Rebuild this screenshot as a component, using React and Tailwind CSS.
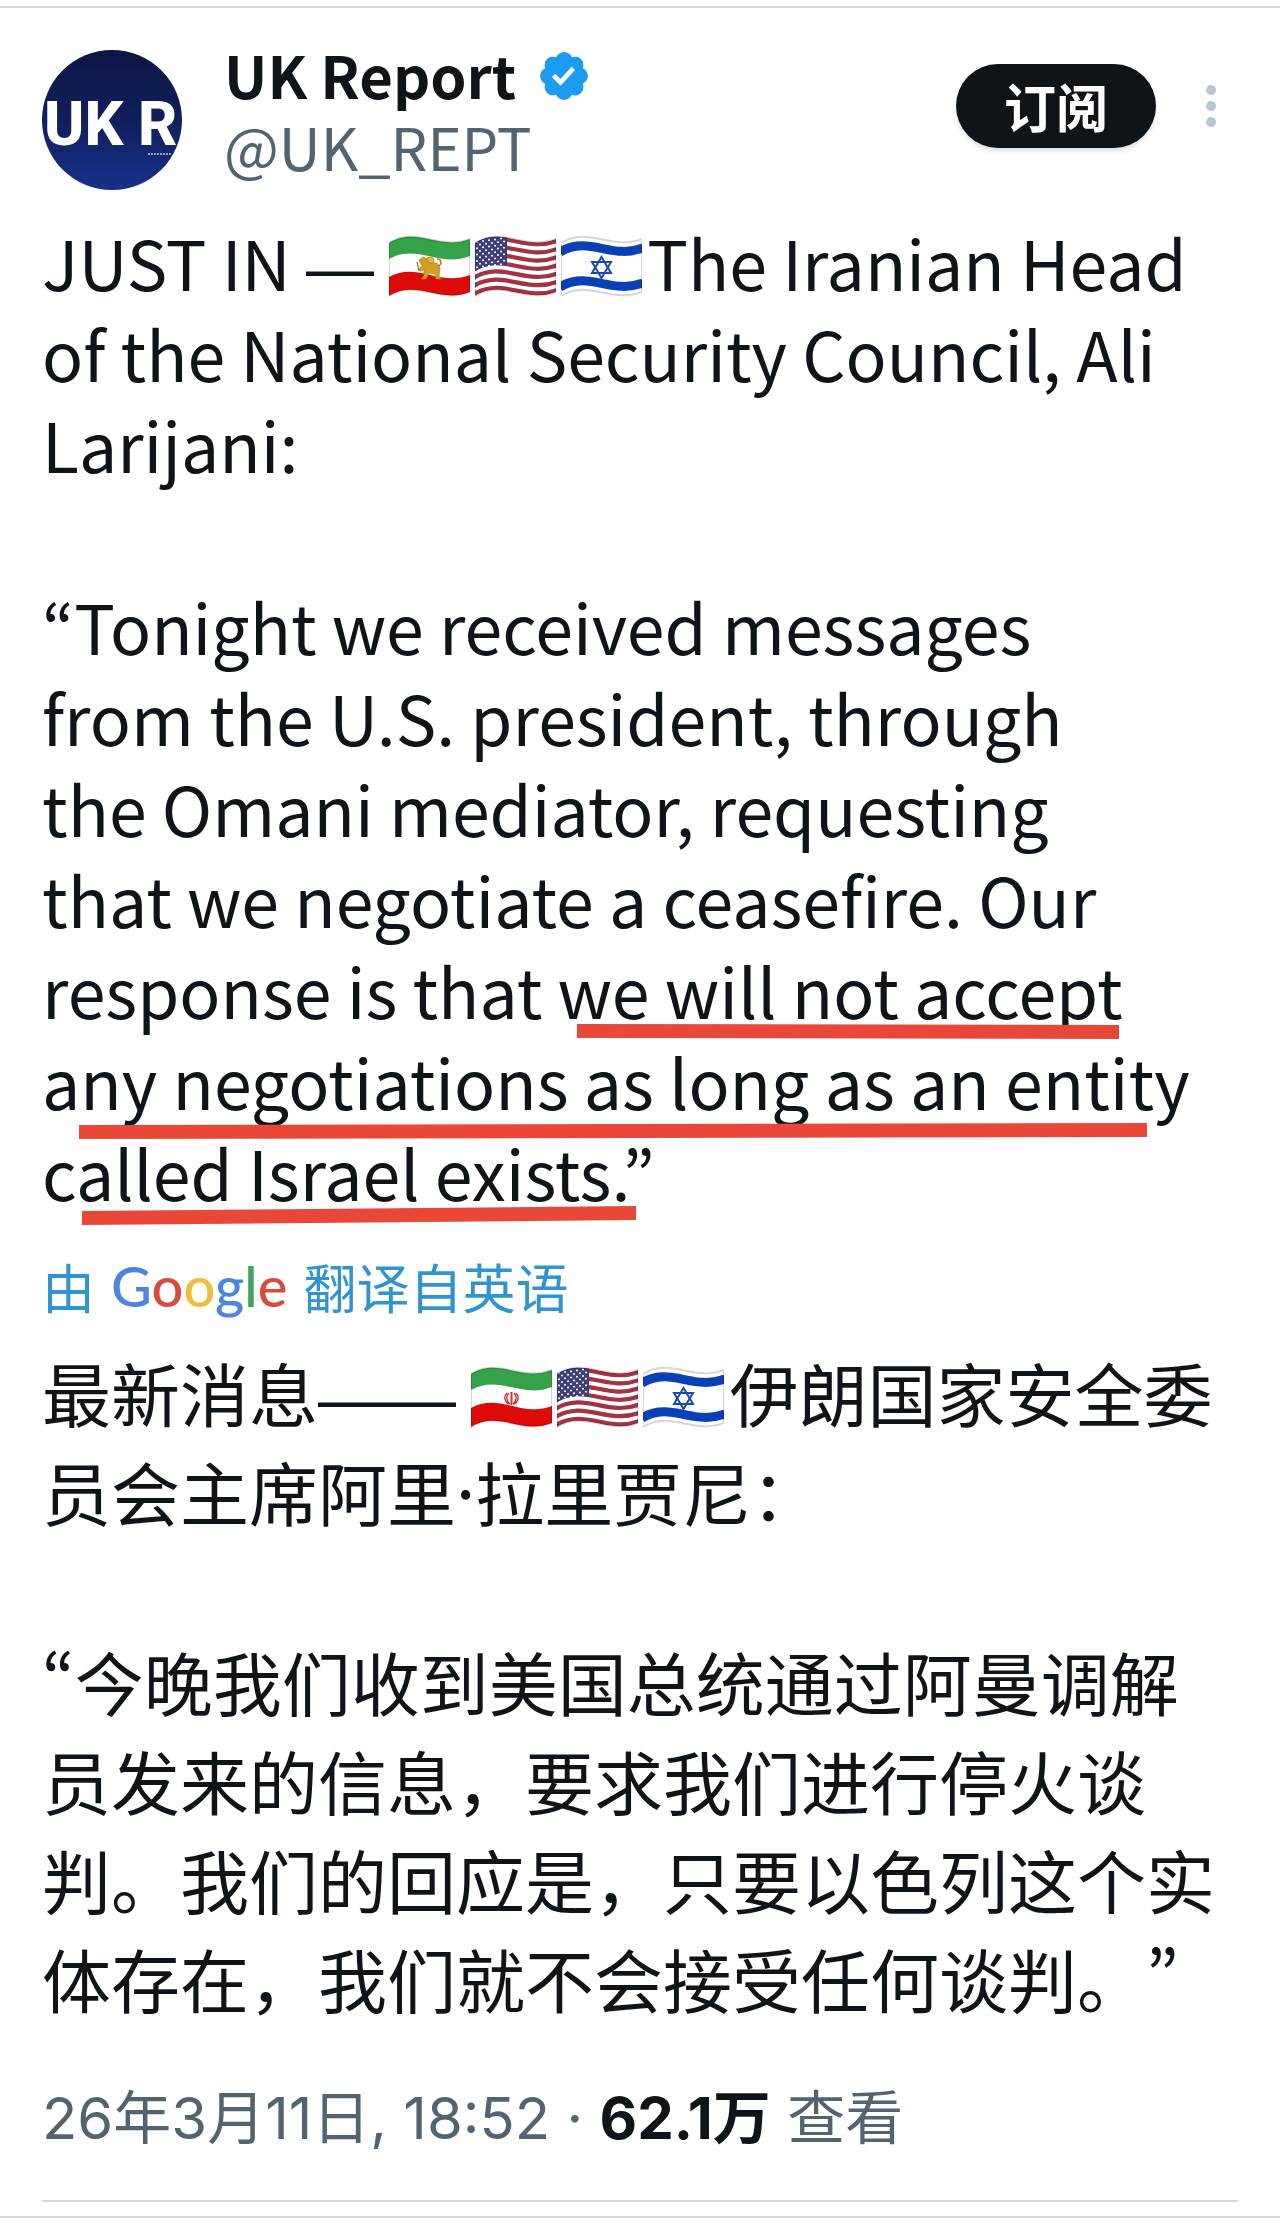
import { useId } from "react";

function VerifiedBadge() {
  return (
    <svg viewBox="0 0 22 22" className="w-14 h-14 mt-1" role="img" aria-label="Verified account">
      <path
        fill="#1d9bf0"
        d="M20.396 11c-.018-.646-.215-1.275-.57-1.816-.354-.54-.852-.972-1.438-1.246.223-.607.27-1.264.14-1.897-.131-.634-.437-1.218-.882-1.687-.47-.445-1.053-.75-1.687-.882-.633-.13-1.29-.083-1.897.14-.273-.587-.704-1.086-1.245-1.44S11.647 1.62 11 1.604c-.646.017-1.273.213-1.813.568s-.969.854-1.24 1.44c-.608-.223-1.267-.272-1.902-.14-.635.13-1.22.436-1.69.882-.445.47-.749 1.055-.878 1.688-.13.633-.08 1.29.144 1.896-.587.274-1.087.705-1.443 1.245-.356.54-.555 1.17-.574 1.817.02.647.218 1.276.574 1.817.356.54.856.972 1.443 1.245-.224.606-.274 1.263-.144 1.896.13.634.433 1.218.877 1.688.47.443 1.054.747 1.687.878.633.132 1.29.084 1.897-.136.274.586.705 1.084 1.246 1.439.54.354 1.17.551 1.816.569.647-.016 1.276-.213 1.817-.567s.972-.854 1.245-1.44c.604.239 1.266.296 1.903.164.636-.132 1.22-.447 1.68-.907.46-.46.776-1.044.908-1.681s.075-1.299-.165-1.903c.586-.274 1.084-.705 1.439-1.246.354-.54.551-1.17.569-1.816z"
      />
      <path
        fill="#fff"
        d="M9.662 14.85l-3.429-3.428 1.293-1.302 2.072 2.072 4.4-4.794 1.347 1.246z"
      />
    </svg>
  );
}

const WAVE = "M0 8C28 -9 50 16 81 4V57C50 69 28 44 0 61Z";

function Flag({ label, children }) {
  const id = useId();
  return (
    <svg
      viewBox="0 0 81 64"
      className="inline-block w-[81px] h-16 mr-[5px] align-[-8px]"
      role="img"
      aria-label={label}
    >
      <clipPath id={id}>
        <path d={WAVE} />
      </clipPath>
      <g clipPath={`url(#${id})`}>{children}</g>
      <path d={WAVE} fill="none" stroke="#000" strokeOpacity="0.16" strokeWidth="2" />
    </svg>
  );
}

function IranFlag({ lion }) {
  return (
    <Flag label="Iran">
      <rect width="81" height="64" fill="#fff" />
      <path d="M0 -14C28 -31 50 -6 81 -18V21C50 33 28 8 0 24Z" fill="#35a148" />
      <path d="M0 42C28 26 50 52 81 40V70H0Z" fill="#dd0a0a" />
      {lion ? (
        <g fill="#d5a021" stroke="#a87414" strokeWidth="0.6">
          <circle cx="41" cy="26" r="4" fill="#e8b93a" />
          <path d="M30 25l4-3 4 2 2 4 8 0 3 5-1 7 2 4h-5l-1-5-6-1-3 6h-5l3-3 0-6-4 1-1-2 3-3z" />
          <path d="M49 31c5-1 3-8-1-7" fill="none" strokeWidth="1.4" />
          <path d="M30 36l-2-9" fill="none" strokeWidth="1.2" />
        </g>
      ) : (
        <g fill="none" stroke="#d22f2f" strokeWidth="1.4">
          <path d="M40.5 26v13" strokeWidth="2" />
          <path d="M38 27c-3 3-3 8 1 11M43 27c3 3 3 8-1 11" />
          <path d="M36 27c-4 4-2 9 2 11M45 27c4 4 2 9-2 11" />
        </g>
      )}
    </Flag>
  );
}

function UsaFlag() {
  const stripes = [0, 1, 2, 3, 4, 5, 6];
  const stars = [0, 1, 2, 3, 4, 5, 6, 7, 8];
  return (
    <Flag label="United States">
      <rect width="81" height="64" fill="#fff" />
      {stripes.map((i) => (
        <path
          key={i}
          d="M-1 8C28 -9 50 16 82 4"
          transform={`translate(0 ${i * 8.2 + 1.8})`}
          fill="none"
          stroke="#a23344"
          strokeWidth="4.2"
        />
      ))}
      <path d="M0 0H32V31C20 28 10 31 0 36Z" fill="#3f3f78" />
      {stars.map((row) =>
        (row % 2 ? [5, 11, 17, 23, 29] : [2, 8, 14, 20, 26]).map((x) => (
          <circle
            key={`${row}-${x}`}
            cx={x}
            cy={row * 3.2 + 7 - x * 0.13}
            r="1"
            fill="#fff"
          />
        )),
      )}
    </Flag>
  );
}

function IsraelFlag() {
  return (
    <Flag label="Israel">
      <rect width="81" height="64" fill="#fff" />
      <g fill="none" stroke="#0a3fb5" strokeWidth="9">
        <path d="M-1 17C28 0 50 25 82 13" />
        <path d="M-1 52C28 35 50 60 82 48" />
      </g>
      <g fill="none" stroke="#1a49b0" strokeWidth="2">
        <path d="M40.5 22L50 38H31Z" />
        <path d="M40.5 43L50 27H31Z" />
      </g>
    </Flag>
  );
}

function Avatar() {
  return (
    <svg viewBox="0 0 140 140" className="w-[140px] h-[140px] shrink-0" role="img" aria-label="UK Report">
      <defs>
        <linearGradient id="avatar-bg" x1="0" y1="0" x2="0" y2="1">
          <stop offset="0" stopColor="#0c1645" />
          <stop offset="0.5" stopColor="#101f5c" />
          <stop offset="1" stopColor="#17308a" />
        </linearGradient>
        <clipPath id="avatar-clip">
          <circle cx="70" cy="70" r="70" />
        </clipPath>
      </defs>
      <g clipPath="url(#avatar-clip)">
        <rect width="140" height="140" fill="url(#avatar-bg)" />
        <g fill="#fff" fontFamily="Roboto, sans-serif" fontWeight="800" fontSize="61">
          <text x="2" y="95">UK</text>
          <text x="96" y="95">R</text>
        </g>
        <path d="M106 104H130" stroke="#8d9acb" strokeWidth="2" strokeDasharray="2 1" />
      </g>
    </svg>
  );
}

// Red marker strokes drawn over the quoted sentence
function Highlights() {
  return (
    <svg
      viewBox="0 0 1196 1020"
      className="absolute left-0 top-0 w-[1196px] h-[1020px] pointer-events-none"
      fill="#e94738"
      aria-hidden="true"
    >
      <path d="M535 808L1077 809V823L535 822Z" />
      <path d="M37 909L1105 907V921L37 923Z" />
      <path d="M40 995L594 990V1004L40 1009Z" />
    </svg>
  );
}

function Dash({ children }) {
  return (
    <span className="font-['Liberation_Sans',sans-serif] leading-none">{children}</span>
  );
}

// Punctuation that keeps its narrow western width inside Chinese text
function Narrow({ children }) {
  return (
    <span lang="ko" className="font-['Noto_Sans_CJK_KR',sans-serif] leading-none">
      {children}
    </span>
  );
}

function PostHeader() {
  return (
    <header className="flex items-start justify-between pr-4">
      <div className="flex gap-[42px]">
        <Avatar />
        <div className="text-[58px] leading-[72px] -mt-3">
          <div className="flex items-center gap-5">
            <h1 className="font-bold">UK Report</h1>
            <VerifiedBadge />
          </div>
          <p className="text-[#536471]">@UK_REPT</p>
        </div>
      </div>
      <div className="flex items-center gap-11 mt-3.5">
        <button
          type="button"
          className="h-[84px] px-12 rounded-full bg-[#0f1419] text-white text-[52px] leading-none font-bold shadow-md"
        >
          订阅
        </button>
        <button type="button" aria-label="More" className="px-1.5">
          <svg viewBox="0 0 10 42" className="w-2.5 h-[42px]" fill="#b9c6d0">
            <circle cx="5" cy="5" r="5" />
            <circle cx="5" cy="21" r="5" />
            <circle cx="5" cy="37" r="5" />
          </svg>
        </button>
      </div>
    </header>
  );
}

export default function App() {
  return (
    <div className="bg-white pt-1.5 font-['Noto_Sans_CJK_KR','Noto_Sans_CJK_SC',sans-serif] text-[#0f1419]">
      <article className="border-y-2 border-[#d3dade] px-[42px] pt-[42px] pb-3.5">
        <PostHeader />

        {/* Original text */}
        <div className="relative mt-[26px] text-[68px] leading-[91px]">
          <p>
            JUST IN <Dash>—</Dash> <IranFlag lion />
            <UsaFlag />
            <IsraelFlag />
            The Iranian Head
            <br />
            of the National Security Council, Ali
            <br />
            Larijani:
          </p>
          <p className="mt-[91px]">
            “Tonight we received messages
            <br />
            from the U.S. president, through
            <br />
            the Omani mediator, requesting
            <br />
            that we negotiate a ceasefire. Our
            <br />
            response is that we will not accept
            <br />
            any negotiations as long as an entity
            <br />
            called Israel exists.”
          </p>
          <Highlights />
        </div>

        {/* Translation */}
        <div lang="zh-CN" className="font-['Noto_Sans_CJK_SC',sans-serif]">
          <a
            href="#translation"
            className="flex items-center gap-4 mt-8 text-[53px] leading-[74px] text-[#2f94d0]"
          >
            <span>由</span>
            <span className="font-['Lato',sans-serif] font-medium text-[56px]">
              <span className="text-[#4c84e0]">G</span>
              <span className="text-[#d54b3d]">o</span>
              <span className="text-[#f0bd3c]">o</span>
              <span className="text-[#4c84e0]">g</span>
              <span className="text-[#41a45a]">l</span>
              <span className="text-[#d54b3d]">e</span>
            </span>
            <span>翻译自英语</span>
          </a>
          <div className="mt-5 text-[69px] leading-[99px] [text-spacing-trim:space-all]">
            <p>
              最新消息<Dash>——</Dash> <IranFlag />
              <UsaFlag />
              <IsraelFlag />
              伊朗国家安全委
              <br />
              员会主席阿里<Narrow>·</Narrow>拉里贾尼：
            </p>
            <p className="mt-[91px]">
              <Narrow>“</Narrow>今晚我们收到美国总统通过阿曼调解
              <br />
              员发来的信息，要求我们进行停火谈
              <br />
              判。我们的回应是，只要以色列这个实
              <br />
              体存在，我们就不会接受任何谈判。<Narrow>”</Narrow>
            </p>
          </div>
        </div>

        {/* Date and views */}
        <footer
          lang="zh-CN"
          className="mt-12 pb-10 border-b-2 border-[#d3dade] font-['Inter','Noto_Sans_CJK_SC',sans-serif] text-[58px] leading-[84px] text-[#536471]"
        >
          <time dateTime="2026-03-11T18:52">26年3月11日, 18:52</time>
          {" · "}
          <strong className="font-bold text-[#0f1419]">62.1万</strong> 查看
        </footer>
      </article>
    </div>
  );
}
